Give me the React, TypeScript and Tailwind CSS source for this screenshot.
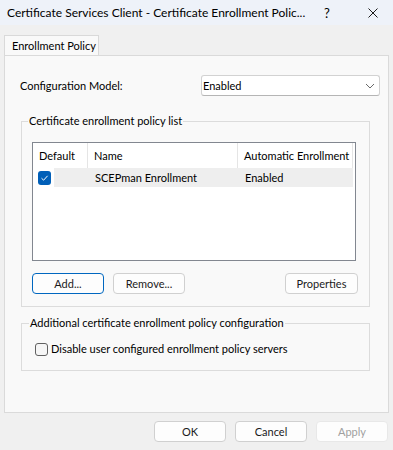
import clsx from "clsx";

function Btn({ label, primary, disabled, className }: { label: string; primary?: boolean; disabled?: boolean; className?: string }) {
  return (
    <div
      className={clsx(
        "h-[21px] w-[72px] rounded-[4px] border flex items-center justify-center bg-[#fdfdfd]",
        primary ? "border-[#0067c0]" : disabled ? "border-[#e8e8e8] bg-[#f8f8f8]" : "border-[#d0d0d0]",
        disabled ? "text-[#a0a0a0]" : "text-[#1b1b1b]",
        className
      )}
    >
      {label}
    </div>
  );
}

function CheckOn() {
  return (
    <div className="w-[13px] h-[14px] rounded-[3px] bg-[#005fb8] flex items-center justify-center">
      <svg width="9" height="8" viewBox="0 0 9 8">
        <path d="M1.5 4.2 L3.6 6.2 L7.6 1.8" fill="none" stroke="#ffffff" strokeWidth="1" />
      </svg>
    </div>
  );
}

export default function App() {
  return (
    <div className="w-[393px] h-[450px] bg-[#f0f0f0] text-[11px] leading-[16px] text-black font-['Lato','Noto_Sans',sans-serif] flex flex-col overflow-hidden">
      {/* title bar */}
      <div className="h-[25px] bg-[#eef2f9] flex items-center pl-[7px] shrink-0 text-[12px]">
        <span className="w-[317px] whitespace-nowrap overflow-hidden">Certificate Services Client - Certificate Enrollment Polic...</span>
        <span className="w-[10px] text-[13px]">?</span>
        <svg className="ml-[34px]" width="10" height="10" viewBox="0 0 10 10">
          <path d="M0.5 0.5 L9.5 9.5 M9.5 0.5 L0.5 9.5" stroke="#1a1a1a" strokeWidth="1" />
        </svg>
      </div>

      {/* tab */}
      <div className="pt-[10px] pl-[4px]">
        <div className="w-[95px] h-[20px] border border-b-0 border-[#d9d9d9] bg-[#f9f9f9] pl-[7px] flex items-center whitespace-nowrap">
          Enrollment Policy
        </div>
      </div>

      {/* panel */}
      <div className="ml-[4px] w-[385px] h-[358px] border border-[#dadada] bg-[#f9f9f9] flex flex-col">
        <div className="mt-[19px] h-[21px] flex items-center">
          <span className="ml-[15px]">Configuration Model:</span>
          <div className="ml-auto mr-[8px] w-[179px] h-[21px] rounded-[3px] border border-[#d2d2d2] border-b-[#b5b5b5] bg-white flex items-center pl-[1px] pr-[4px]">
            <span>Enabled</span>
            <svg className="ml-auto" width="10" height="6" viewBox="0 0 10 6">
              <path d="M1 1 L5 5 L9 1" fill="none" stroke="#6a6a6a" strokeWidth="1" />
            </svg>
          </div>
        </div>

        <fieldset className="mt-[17px] ml-[16px] w-[349px] border border-[#dcdcdc] pb-[12px]">
          <legend className="ml-[6px] px-[1px] whitespace-nowrap">Certificate enrollment policy list</legend>
          <div className="mt-[13px] ml-[10px] w-[324px] h-[119px] border border-[#828790] bg-white">
            <div className="h-[25px] flex items-stretch">
              <div className="w-[55px] pl-[6px] flex items-center border-r border-[#e5e5e5]">Default</div>
              <div className="w-[150px] pl-[6px] flex items-center border-r border-[#e5e5e5]">Name</div>
              <div className="w-[115px] pl-[6px] flex items-center border-r border-[#e5e5e5] whitespace-nowrap">Automatic Enrollment</div>
            </div>
            <div className="h-[19px] flex items-stretch">
              <div className="w-[21px] flex items-center pl-[5px]">
                <CheckOn />
              </div>
              <div className="w-[299px] bg-[#eeeeee] flex items-center">
                <span className="w-[34px]" />
                <span className="w-[150px] pl-[7px]">SCEPman Enrollment</span>
                <span className="pl-[7px]">Enabled</span>
              </div>
            </div>
          </div>
          <div className="mt-[12px] ml-[10px] flex">
            <Btn label="Add..." primary />
            <Btn label="Remove..." className="ml-[9px]" />
            <Btn label="Properties" className="ml-[100px] w-[73px]" />
          </div>
        </fieldset>

        <fieldset className="mt-[8px] ml-[16px] w-[349px] border border-[#dcdcdc] pb-[13px]">
          <legend className="ml-[7px] px-[1px] whitespace-nowrap">Additional certificate enrollment policy configuration</legend>
          <div className="mt-[10px] ml-[13px] flex items-center">
            <div className="w-[13px] h-[13px] rounded-[3px] border border-[#616161] bg-[#f6f6f6]" />
            <span className="ml-[3px]">Disable user configured enrollment policy servers</span>
          </div>
        </fieldset>
      </div>

      {/* bottom buttons */}
      <div className="mt-[8px] flex justify-end gap-[9px] pr-[5px]">
        <Btn label="OK" />
        <Btn label="Cancel" />
        <Btn label="Apply" disabled />
      </div>
    </div>
  );
}
